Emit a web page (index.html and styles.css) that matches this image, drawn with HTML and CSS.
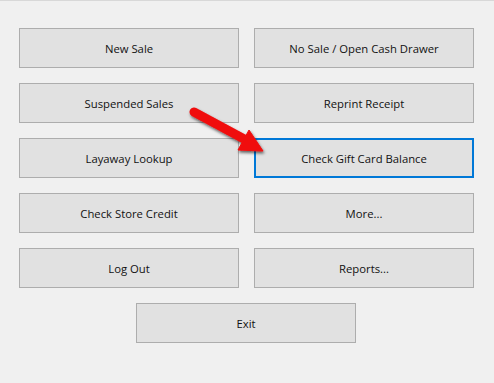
FILE: index.html
```html
<!DOCTYPE html>
<html lang="en">
<head>
    <meta charset="UTF-8">
    <meta name="viewport" content="width=device-width, initial-scale=1.0">
    <title>Main Menu</title>
    <link rel="stylesheet" href="styles.css">
</head>
<body>
    <main class="menu">
        <button class="btn">New Sale</button>
        <button class="btn">No Sale / Open Cash Drawer</button>
        <button class="btn">Suspended Sales</button>
        <button class="btn">Reprint Receipt</button>
        <button class="btn">Layaway Lookup</button>
        <button class="btn focused">Check Gift Card Balance</button>
        <button class="btn">Check Store Credit</button>
        <button class="btn">More...</button>
        <button class="btn">Log Out</button>
        <button class="btn">Reports...</button>
        <button class="btn exit">Exit</button>
    </main>

    <!-- callout arrow pointing at the gift card button -->
    <svg class="arrow" width="494" height="383" viewBox="0 0 494 383">
        <defs>
            <filter id="shadow" x="-20%" y="-20%" width="140%" height="140%">
                <feDropShadow dx="1" dy="2" stdDeviation="1.5" flood-color="#000" flood-opacity="0.6"/>
            </filter>
        </defs>
        <g filter="url(#shadow)" fill="#f00a0a" stroke="#f00a0a">
            <line x1="194" y1="112" x2="246" y2="140" stroke-width="9" stroke-linecap="round"/>
            <polygon points="263,151 238,150 249,130" stroke-width="1" stroke-linejoin="round"/>
        </g>
    </svg>
</body>
</html>
```

FILE: styles.css
```css
body {
    margin: 0;
    height: 382px;
    background-color: #f0f0f0;
    border-top: 1px solid #d8d8d8;
    font-family: "Segoe UI", "Open Sans", Arial, sans-serif;
    overflow: hidden;
}
.menu {
    display: grid;
    grid-template-columns: 220px 220px;
    grid-auto-rows: 40px;
    column-gap: 15px;
    row-gap: 15px;
    padding: 27px 0 0 19px;
}
.btn {
    box-sizing: border-box;
    background-color: #e1e1e1;
    border: 1px solid #adadad;
    font-family: inherit;
    font-size: 11.3px;
    color: #111;
    padding: 0;
    margin: 0;
}
.focused {
    border: 2px solid #0078d7;
}
.exit {
    grid-column: 1 / 3;
    justify-self: start;
    margin-left: 117px;
    width: 220px;
}
.arrow {
    position: absolute;
    top: 0;
    left: 0;
    pointer-events: none;
}
```
